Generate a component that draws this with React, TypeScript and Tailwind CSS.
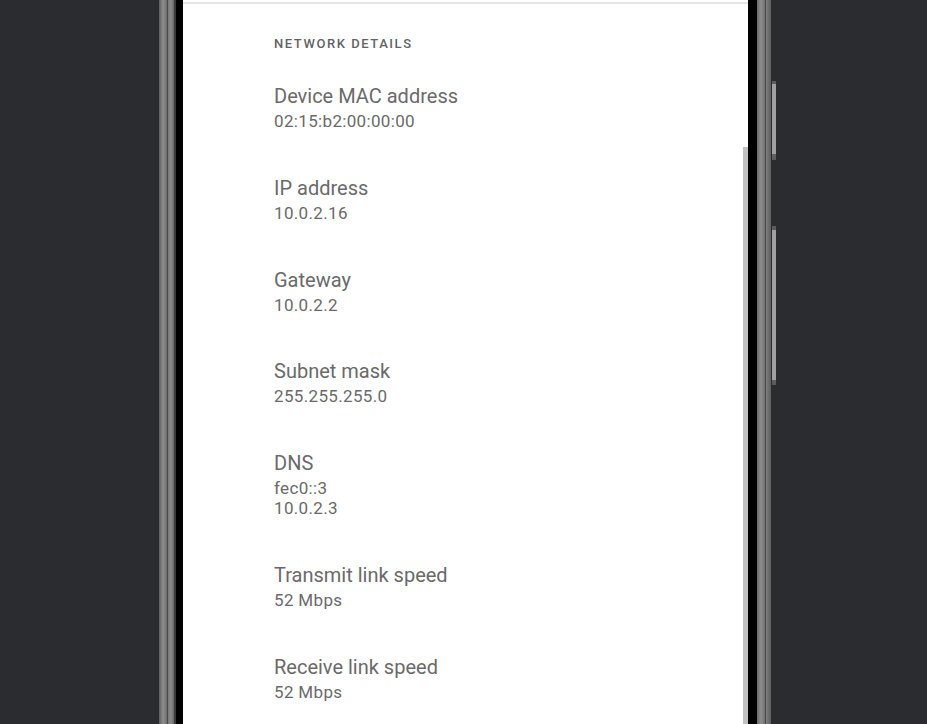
import React from "react";

const items: { title: string; values: string[] }[] = [
  { title: "Device MAC address", values: ["02:15:b2:00:00:00"] },
  { title: "IP address", values: ["10.0.2.16"] },
  { title: "Gateway", values: ["10.0.2.2"] },
  { title: "Subnet mask", values: ["255.255.255.0"] },
  { title: "DNS", values: ["fec0::3", "10.0.2.3"] },
  { title: "Transmit link speed", values: ["52 Mbps"] },
  { title: "Receive link speed", values: ["52 Mbps"] },
];

export default function App() {
  return (
    <div
      className="flex h-[724px] w-[927px] overflow-hidden bg-[#2b2c30]"
      style={{ fontFamily: "Roboto, 'Noto Sans', sans-serif" }}
    >
      <div className="w-[159px] shrink-0" />
      {/* left frame */}
      <div className="w-[8px] shrink-0 bg-gradient-to-r from-[#5c5c5c] via-[#8e8e8e] to-[#6e6e6e]" />
      <div className="w-[1px] shrink-0 bg-[#4a4a4a]" />
      <div className="w-[6px] shrink-0 bg-gradient-to-r from-[#7a7a7a] via-[#8a8a8a] to-[#666666]" />
      <div className="w-[2px] shrink-0 bg-[#3a3a3a]" />
      <div className="w-[7px] shrink-0 bg-black" />
      {/* screen */}
      <div className="relative w-[565px] shrink-0 overflow-hidden bg-white">
        <div className="mt-[2px] h-[2px] bg-[#e4e4e4]" />
        <div className="pl-[91px]">
          <div className="mt-[32px] text-[13px] leading-[16px] tracking-[0.12em] text-[#5f6368] font-medium">
            NETWORK DETAILS
          </div>
          <div className="mt-[10px]">
            {items.map((it) => (
              <div key={it.title} className="pt-[22px] pb-[22.75px]">
                <div className="text-[20px] leading-[24px] text-[#6a6a6a]">{it.title}</div>
                <div className="mt-[3px]">
                  {it.values.map((v) => (
                    <div
                      key={v}
                      className="text-[17px] leading-[20px] tracking-[0.02em] text-[#6a6a6a]"
                    >
                      {v}
                    </div>
                  ))}
                </div>
              </div>
            ))}
          </div>
        </div>
        <div className="absolute right-0 top-[147px] h-[600px] w-[5px] bg-[#c2c2c2]" />
      </div>
      {/* right frame */}
      <div className="w-[9px] shrink-0 bg-black" />
      <div className="w-[8px] shrink-0 bg-gradient-to-r from-[#6a6a6a] via-[#8e8e8e] to-[#707070]" />
      <div className="w-[1px] shrink-0 bg-[#4a4a4a]" />
      <div className="w-[5px] shrink-0 bg-gradient-to-r from-[#7e7e7e] to-[#5e5e5e]" />
      <div className="w-[1px] shrink-0" />
      {/* side buttons */}
      <div className="flex w-[4px] shrink-0 flex-col">
        <div className="mt-[81px] h-[79px] bg-gradient-to-b from-[#5a5a5a] via-[#9a9a9a] to-[#5a5a5a]">
          <div className="mt-[3px] h-[70px] bg-[#a0a0a0]" />
        </div>
        <div className="mt-[66px] h-[159px] bg-gradient-to-b from-[#5a5a5a] via-[#9a9a9a] to-[#5a5a5a]">
          <div className="mt-[4px] h-[150px] bg-[#a0a0a0]" />
        </div>
      </div>
    </div>
  );
}
